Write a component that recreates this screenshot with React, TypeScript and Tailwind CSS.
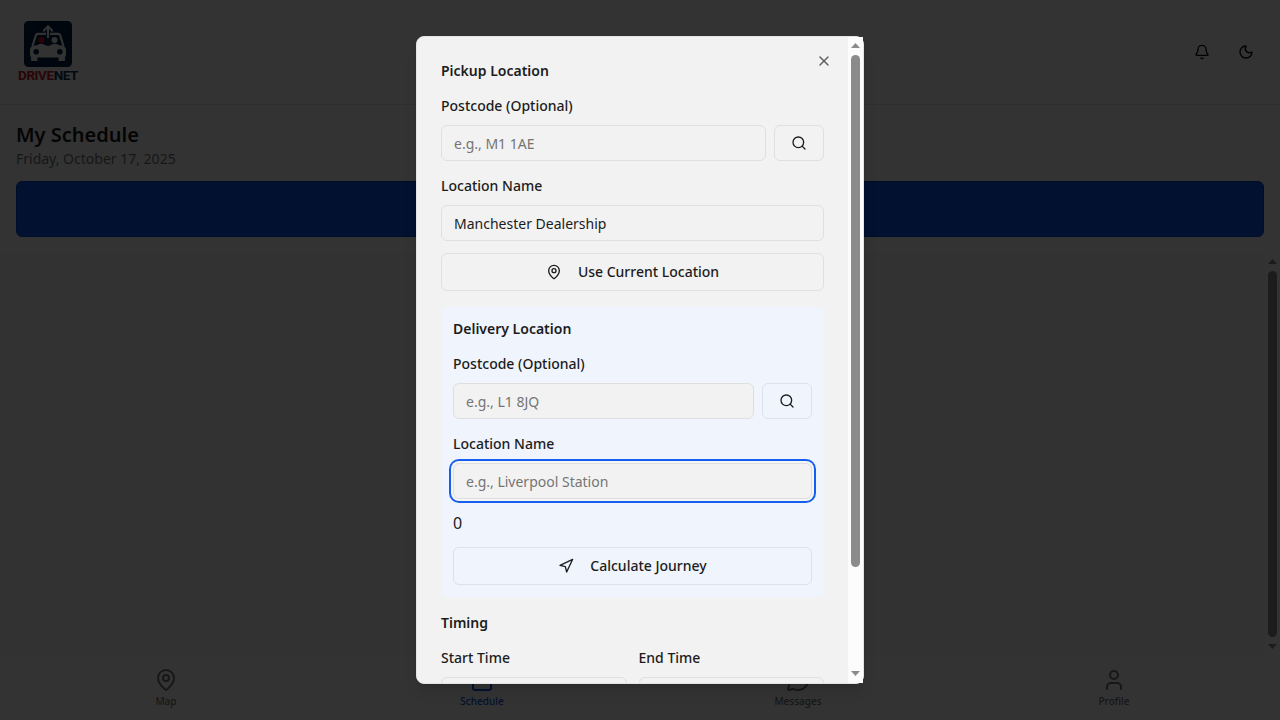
import React from "react";
import { Bell, Calendar, MapPin, MessageCircle, Moon, Navigation, Search, User, X } from "lucide-react";

function Logo() {
  return (
    <div className="flex h-16 w-16 flex-col items-center">
      <svg width="64" height="48" viewBox="16 20 64 48" className="block shrink-0">
        <rect x="24" y="21" width="48" height="46" rx="4.500" fill="#002040" />
        <path d="M32.500 46 L35.800 35.500 Q36.300 33.900 38 33.900 H58 Q59.700 33.900 60.200 35.500 L63.500 46" fill="none" stroke="#fafafa" strokeWidth="2.200" />
        <path d="M30 50 Q30 46.500 33.500 45.800 L37 45.300 Q41 42.800 44 44.500 Q48 47.300 52 44.500 Q55 42.800 59 45.300 L62.500 45.800 Q66 46.500 66 50 V55.500 L65 57 V60 Q65 61 64 61 H59.500 Q58.500 61 58.500 60 V57.500 H37.500 V60 Q37.500 61 36.500 61 H32 Q31 61 31 60 V57 L30 55.500 Z" fill="#fafafa" />
        <circle cx="36.200" cy="51.700" r="2.800" fill="#002040" />
        <circle cx="59.800" cy="51.700" r="2.800" fill="#002040" />
        <circle cx="41.300" cy="40" r="3" fill="#d01020" />
        <circle cx="54.500" cy="40" r="3" fill="#fafafa" />
        <path d="M48 38 V27 M43.500 31 L48 26.300 L52.500 31" fill="none" stroke="#002040" strokeWidth="4" />
        <path d="M48 38 V27 M43.300 31.200 L48 26.300 L52.700 31.200" fill="none" stroke="#fafafa" strokeWidth="2.200" />
      </svg>
      <div className="flex pt-px font-['Roboto',sans-serif] text-[13.500px] leading-[13px] font-bold tracking-[-0.45px]">
        <span className="text-[#d01824]">DRIVE</span>
        <span className="text-[#0c3458]">NET</span>
      </div>
    </div>
  );
}

function Scrollbar({ track, ink, thumb }: { track: string; ink: string; thumb: string }) {
  return (
    <div className={`flex w-[15px] shrink-0 flex-col items-center ${track}`}>
      <svg width="15" height="18" viewBox="0 0 15 18" className={`shrink-0 ${ink}`}>
        <path d="M7.500 6 L12 11 H3 Z" fill="currentColor" />
      </svg>
      <div className={`w-[9px] rounded-full bg-current ${ink} ${thumb}`} />
      <div className="flex-1" />
      <svg width="15" height="18" viewBox="0 0 15 18" className={`shrink-0 ${ink}`}>
        <path d="M7.500 11 L12 6 H3 Z" fill="currentColor" />
      </svg>
    </div>
  );
}

function NavItem({ icon: Icon, label, active }: { icon: React.ElementType; label: string; active?: boolean }) {
  return (
    <div className={`flex flex-1 flex-col items-center justify-center gap-0.5 ${active ? "text-[#1058e8]" : "text-[#737373]"}`}>
      <Icon size={24} />
      <span className="text-[10px] leading-[15px] font-medium">{label}</span>
    </div>
  );
}

function Label({ children }: { children: React.ReactNode }) {
  return (
    <div className="h-6 leading-6">
      <label className="text-sm leading-none font-medium">{children}</label>
    </div>
  );
}

const inputClass =
  "block h-9 w-full min-w-0 rounded-md border border-[#dfdfdf] bg-[#f2f2f2] px-3 py-2 text-sm outline-none placeholder:text-[#757575]";
const buttonClass = "flex items-center justify-center rounded-md border text-sm font-medium";

function Field({ label, placeholder, value, focused, search, border = "border-[#dfdfdf]" }: {
  label: string;
  placeholder?: string;
  value?: string;
  focused?: boolean;
  search?: boolean;
  border?: string;
}) {
  return (
    <div>
      <Label>{label}</Label>
      <div className="mt-2 flex gap-2">
        <input
          className={`${inputClass} ${focused ? "ring-2 ring-[#155eef] ring-offset-2 ring-offset-[#f5f5f5]" : ""}`}
          placeholder={placeholder}
          defaultValue={value}
        />
        {search && (
          <button className={`${buttonClass} ${border} h-9 w-[50px] shrink-0`}>
            <Search size={16} />
          </button>
        )}
      </div>
    </div>
  );
}

function Dialog() {
  return (
    <div className="relative flex h-[648px] w-[448px] rounded-lg border border-[#e4e4e4] bg-[#f2f2f2] text-[#1c1c1c] shadow-lg">
      <div className="h-full min-w-0 flex-1 overflow-hidden rounded-l-lg p-6">
        <section className="space-y-3">
          <h3 className="text-sm font-semibold">Pickup Location</h3>
          <Field label="Postcode (Optional)" placeholder="e.g., M1 1AE" search />
          <Field label="Location Name" value="Manchester Dealership" />
          <button className={`${buttonClass} h-[38px] w-full gap-4 border-[#dfdfdf]`}>
            <MapPin size={16} />
            Use Current Location
          </button>
        </section>
        <section className="mt-4 space-y-3 rounded-md bg-[#eff4fd] p-3">
          <h3 className="text-sm font-semibold">Delivery Location</h3>
          <Field label="Postcode (Optional)" placeholder="e.g., L1 8JQ" search border="border-[#dce1ea]" />
          <Field label="Location Name" placeholder="e.g., Liverpool Station" focused />
          <div className="leading-6">0</div>
          <button className={`${buttonClass} h-[38px] w-full gap-4 border-[#dce1ea]`}>
            <Navigation size={16} />
            Calculate Journey
          </button>
        </section>
        <section className="mt-4 space-y-3">
          <h3 className="text-sm font-semibold">Timing</h3>
          <div className="grid grid-cols-2 gap-3">
            <Field label="Start Time" />
            <Field label="End Time" />
          </div>
        </section>
      </div>
      <Scrollbar track="bg-[#fcfcfc]" ink="text-[#8b8b8b]" thumb="h-[512px]" />
      <button className="absolute top-4 right-[31px] opacity-70">
        <X size={16} />
      </button>
    </div>
  );
}

export default function App() {
  return (
    <div className="relative h-[720px] w-[1280px] overflow-hidden font-['Noto_Sans',sans-serif] text-[#171717]">
      <div className="flex h-full flex-col bg-white">
        <header className="flex h-[105px] items-center justify-between border-b border-[#e8e8e8] px-4">
          <Logo />
          <div className="flex items-center gap-7 pr-2.5 text-black">
            <Bell size={16} />
            <Moon size={16} />
          </div>
        </header>
        <div className="p-4">
          <h1 className="text-xl leading-7 font-semibold">My Schedule</h1>
          <p className="text-sm text-[#737373]">Friday, October 17, 2025</p>
          <div className="mt-3 h-14 rounded-md border border-[#0b49cc] bg-[#0c55e8]" />
        </div>
        <div className="flex min-h-0 flex-1">
          <main className="flex-1 bg-[#f8f8f8]" />
          <Scrollbar track="bg-[#fcfcfc]" ink="text-[#8b8b8b]" thumb="h-[366px]" />
        </div>
        <nav className="flex h-16 shrink-0 px-2">
          <NavItem icon={MapPin} label="Map" />
          <NavItem icon={Calendar} label="Schedule" active />
          <NavItem icon={MessageCircle} label="Messages" />
          <NavItem icon={User} label="Profile" />
        </nav>
      </div>
      <div className="absolute inset-0 flex items-center justify-center bg-black/80">
        <Dialog />
      </div>
    </div>
  );
}
